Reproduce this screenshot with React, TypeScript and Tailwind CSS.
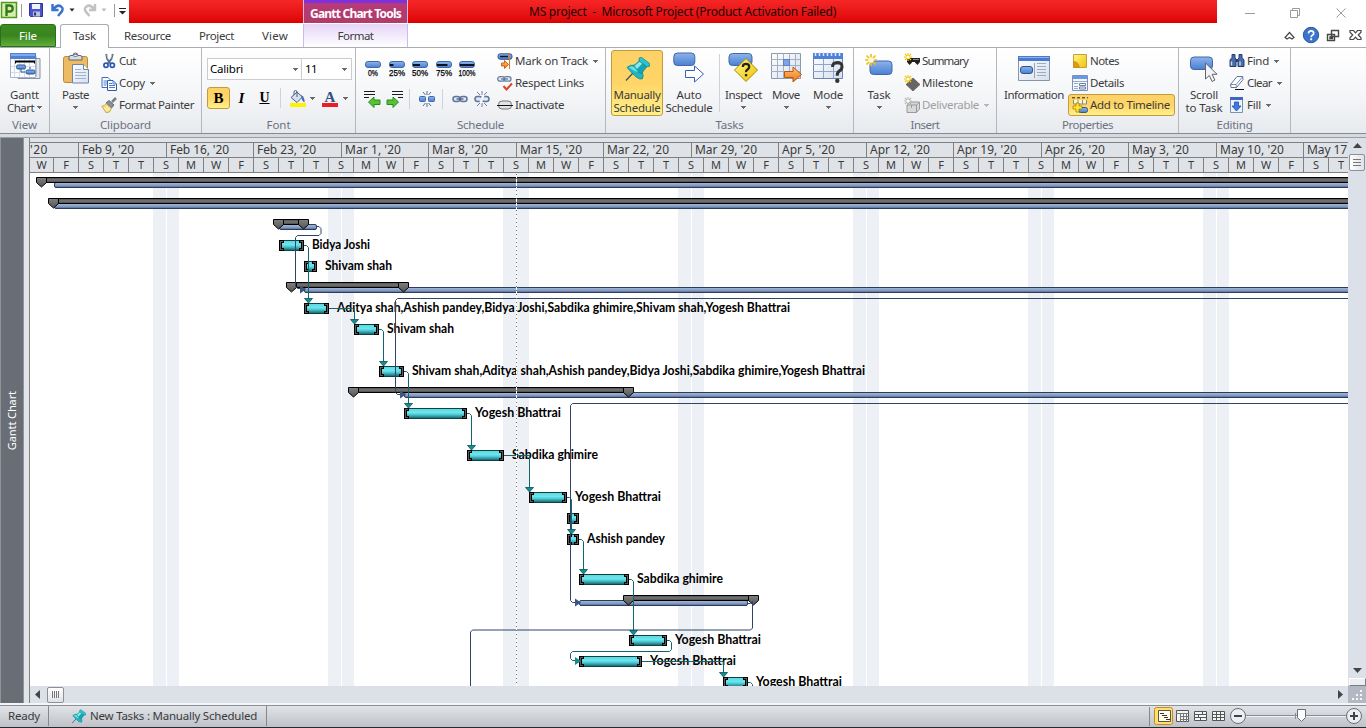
import { useLayoutEffect, useRef } from "react";
import type { ReactNode } from "react";

/* Text run spaced out to an exact width. */
function Fit({ w, children, className = "" }: { w: number; children: string; className?: string }) {
  const ref = useRef<HTMLSpanElement>(null);
  useLayoutEffect(() => {
    const el = ref.current;
    if (!el) return;
    el.style.letterSpacing = "0px";
    const gap = (w - el.getBoundingClientRect().width) / children.length;
    el.style.letterSpacing = `${gap}px`;
  }, [w, children]);
  return (
    <span ref={ref} className={`inline-block shrink-0 whitespace-pre ${className}`}>
      {children}
    </span>
  );
}

const Caret = ({ className = "text-[#6a6a6a]" }: { className?: string }) => (
  <svg width="5" height="3" viewBox="0 0 5 3" className={`shrink-0 ${className}`} shapeRendering="crispEdges">
    <path d="M0 0h5v1H4v1H3v1H2V2H1V1H0z" fill="currentColor" />
  </svg>
);

function Defs() {
  return (
    <svg width="0" height="0" className="absolute">
      <defs>
        <linearGradient id="blue" x1="0" y1="0" x2="0" y2="1">
          <stop offset="0" stopColor="#8db4ec" />
          <stop offset="1" stopColor="#4a7fd0" />
        </linearGradient>
        <linearGradient id="paper" x1="0" y1="0" x2="1" y2="1">
          <stop offset="0" stopColor="#ffffff" />
          <stop offset="1" stopColor="#d5dfee" />
        </linearGradient>
        <linearGradient id="orange" x1="0" y1="0" x2="0" y2="1">
          <stop offset="0" stopColor="#ffc47a" />
          <stop offset="1" stopColor="#ee7410" />
        </linearGradient>
        <linearGradient id="yellow" x1="0" y1="0" x2="1" y2="1">
          <stop offset="0" stopColor="#fff68a" />
          <stop offset="1" stopColor="#f2c200" />
        </linearGradient>
        <linearGradient id="task" x1="0" y1="0" x2="0" y2="1">
          <stop offset="0" stopColor="#5fd8de" />
          <stop offset="0.4" stopColor="#6ce6ee" />
          <stop offset="0.6" stopColor="#50ccd4" />
          <stop offset="1" stopColor="#1c6b73" />
        </linearGradient>
        <linearGradient id="sum" x1="0" y1="0" x2="0" y2="1">
          <stop offset="0" stopColor="#4c4c4c" />
          <stop offset="0.5" stopColor="#767676" />
          <stop offset="1" stopColor="#444444" />
        </linearGradient>
        <linearGradient id="mark" x1="0" y1="0" x2="0" y2="1">
          <stop offset="0" stopColor="#808080" />
          <stop offset="1" stopColor="#555555" />
        </linearGradient>
        <linearGradient id="roll" x1="0" y1="0" x2="0" y2="1">
          <stop offset="0" stopColor="#a9bbd8" />
          <stop offset="0.6" stopColor="#8299c0" />
          <stop offset="1" stopColor="#4c6590" />
        </linearGradient>
      </defs>
    </svg>
  );
}

const Ico = ({ s = 16, w, h, children }: { s?: number; w?: number; h?: number; children: ReactNode }) => (
  <svg width={w ?? s} height={h ?? s} viewBox={`0 0 ${w ?? s} ${h ?? s}`} className="shrink-0" fill="none">
    {children}
  </svg>
);

const Star = ({ x = 0, y = 0, c = "#f5c400" }: { x?: number; y?: number; c?: string }) => (
  <g transform={`translate(${x} ${y})`} stroke={c} strokeWidth="1.1">
    <path d="M4 0v8M0 4h8M1 1l6 6M7 1l-6 6" />
    <circle cx="4" cy="4" r="1.6" fill="#fff" stroke="none" />
  </g>
);

const Pin = ({ s }: { s: number }) => (
  <svg width={s} height={s} viewBox="0 0 26 26" className="shrink-0" fill="none">
    <path d="M9 17L2 24.500" stroke="#3f5560" strokeWidth="1.300" />
    <path d="M3 11.500q3-3.200 7.500-2.300l8 7.300q1.500 4-.300 6.500-3 .5-6-2T3 11.500z" fill="#22b6c0" stroke="#138590" strokeWidth=".8" />
    <path d="M9.500 10l6-5.500 7.500 6-5.500 7q-3.500 0-8-7.500z" fill="#18a4ae" stroke="#138590" strokeWidth=".7" />
    <path d="M10.500 10l5.500-4.700 2.500 2-5.500 5.600z" fill="#86eaee" />
    <path d="M15 2.300q1.500-1.300 3-.6l7.500 5.800q1 1.600 0 2.800l-2.700.4L15.300 5z" fill="#2cc4cd" stroke="#138590" strokeWidth=".8" />
    <path d="M5 11.300q3-1.500 5-.3l4 5q-4-.5-9-4.700z" fill="#6fe0e5" />
  </svg>
);

const GanttIcon = () => (
  <Ico s={32}>
    <path d="M9 6.500h22v20H9z" fill="#e6e9ef" stroke="#8a93a3" />
    <path d="M5 4.500h22v20H5z" fill="#f2f4f8" stroke="#8a93a3" />
    <path d="M1.500 1.500h25v24h-25z" fill="#fdfdfe" stroke="#a4b2cc" />
    <path d="M1 1h26v6H1z" fill="#4e82d8" />
    <path d="M2 2h24v2H2z" fill="#80a8ea" />
    <path d="M5.500 7v18M10.500 7v18M15.500 7v18M20.500 7v18M2 14.500h24M2 20.500h24" stroke="#d4dded" />
    <path d="M6 8.500h20v3h-1v-1H7v1H6z" fill="#000" />
    <rect x="7.500" y="13" width="9" height="4" rx="1.500" fill="url(#blue)" stroke="#2a5592" />
    <rect x="17" y="18" width="9" height="4" rx="1.500" fill="url(#blue)" stroke="#2a5592" />
    <path d="M12 17v3h4M21 15v2" stroke="#2a5592" />
  </Ico>
);

const PasteIcon = () => (
  <Ico s={32}>
    <rect x="3.500" y="4.500" width="24" height="26" rx="2" fill="#edbb62" stroke="#b98a3c" />
    <path d="M9 8V5q0-1.500 2-1.500h2q0-2.500 2.500-2.500T18 3.500h2q2 0 2 1.500v3z" fill="#d9dce2" stroke="#5f6670" />
    <rect x="14" y="2.500" width="3" height="2" fill="#fff" stroke="#5f6670" strokeWidth=".7" />
    <path d="M12.500 12.500h11l5 5v13.500h-16z" fill="url(#paper)" stroke="#6d86ad" />
    <path d="M23.500 12.500v5h5" fill="#fff" stroke="#6d86ad" />
    <path d="M15 17.500h6M15 20.500h11M15 23.500h11M15 26.500h11" stroke="#9db3d6" />
  </Ico>
);

const CutIcon = () => (
  <Ico>
    <path d="M5.200 1l1 5 3 4.500M11.800 1l-1.500 5-3.500 4.500" stroke="#5d6b80" strokeWidth="1.900" />
    <path d="M5.800 2l1.500 4.500M11 2L9.500 6" stroke="#e6ecf5" strokeWidth=".6" />
    <circle cx="5" cy="12.300" r="2.100" stroke="#2857b8" strokeWidth="1.700" />
    <circle cx="11.300" cy="12.300" r="2.100" stroke="#2857b8" strokeWidth="1.700" />
  </Ico>
);
const CopyIcon = () => (
  <Ico>
    <path d="M1 2.500h6l3 3v7H1z" fill="#fff" stroke="#3c6cc0" />
    <path d="M2.500 6h4M2.500 8h4M2.500 10h3" stroke="#4d7bc9" />
    <path d="M6.500 5.500h5.500l3.500 3.500v6.500h-9z" fill="#fff" stroke="#2d5cb0" />
    <path d="M8 8.500h3M8 10.500h6M8 12.500h6M12 5.500v3.500h3.500" stroke="#4d7bc9" />
  </Ico>
);
const BrushIcon = () => (
  <Ico>
    <path d="M11 5l4-4" stroke="#7a7a8a" strokeWidth="2.500" />
    <path d="M8 3.500l5 4.500-2.500 3L5 6z" fill="#8890a0" stroke="#4a5060" strokeWidth=".8" />
    <path d="M5 6.500l5.500 4.800-2 3.700-3.500.6L.8 9.300q3-.3 4.200-2.800z" fill="#f7e08a" stroke="#c09a30" strokeWidth=".8" />
    <path d="M3.500 11l3 3M5.500 10l3 3" stroke="#fffbe0" />
  </Ico>
);

const PctIcon = ({ p, t }: { p: number; t: string }) => (
  <Ico w={18} h={18}>
    <rect x="1.500" y="1.500" width="15" height="6" rx="2.500" fill="url(#blue)" stroke="#3f69a8" />
    {p > 0 && <rect x="2" y="4" width={(14 * p) / 100} height="2" fill="#0a1220" />}
    <text x="9" y="15.500" fontSize="8.500" fontFamily="Liberation Sans" textAnchor="middle" textLength={t.length > 3 ? 17 : t.length > 2 ? 16 : 10} lengthAdjust="spacingAndGlyphs" fill="#000" stroke="#000" strokeWidth=".25">
      {t}
    </text>
  </Ico>
);

const Dent = ({ flip = false }: { flip?: boolean }) => (
  <Ico w={17} h={17}>
    <g transform={flip ? "translate(17 0) scale(-1 1)" : undefined}>
      <path d="M0 .5h11M0 3.500h11M0 6.500h5" stroke="#1a1a1a" />
      <path d="M4.500 11L10 6v3h6v4.500h-6v3z" fill="#54c435" stroke="#2c8a1c" />
    </g>
  </Ico>
);
const Chain = ({ cut = false }: { cut?: boolean }) => (
  <Ico w={16} h={16}>
    {cut && <path d="M8 0v4M8 16v-4M3 1l3 3M13 1l-3 3M3 15l3-3M13 15l-3-3" stroke="#5c7396" strokeWidth=".9" />}
    <rect x="1" y="5.500" width="7" height="5" rx="2.500" stroke="#5f769e" strokeWidth="1.500" fill="#dfe7f3" />
    <rect x="8" y="5.500" width="7" height="5" rx="2.500" stroke="#5f769e" strokeWidth="1.500" fill="#dfe7f3" />
    {cut ? <path d="M9.500 4l-3 8" stroke="#f6f7f9" strokeWidth="2.400" /> : <path d="M4.500 8h7" stroke="#455a80" strokeWidth="1.300" />}
  </Ico>
);
const SplitIcon = () => (
  <Ico>
    <path d="M8 0v4M8 16v-4M4 1l2.500 3M12 1L9.500 4M4 15l2.500-3M12 15l-2.500-3" stroke="#41618f" strokeWidth=".9" />
    <rect x=".5" y="5.500" width="6" height="5" rx="1" fill="url(#blue)" stroke="#3f69a8" />
    <rect x="9.500" y="5.500" width="6" height="5" rx="1" fill="url(#blue)" stroke="#3f69a8" />
  </Ico>
);
const MarkIcon = () => (
  <Ico>
    <rect x="1" y=".8" width="14" height="5.500" rx="2.200" fill="url(#blue)" stroke="#2f5590" />
    <path d="M3 3.500h8" stroke="#0a1220" strokeWidth="1.500" />
    <path d="M12.500 0v16" stroke="#e87810" />
    <path d="M4.500 10h3V7.500l4 4-4 4V13h-3z" fill="url(#orange)" stroke="#b85408" strokeWidth=".8" />
  </Ico>
);
const RespectIcon = () => (
  <Ico>
    <rect x=".7" y="1.700" width="7" height="4.500" rx="2.200" stroke="#6a80a6" strokeWidth="1.300" fill="#dfe7f3" />
    <rect x="7" y="1.700" width="7" height="4.500" rx="2.200" stroke="#6a80a6" strokeWidth="1.300" fill="#dfe7f3" />
    <path d="M4 4h7" stroke="#455a80" />
    <path d="M6.500 11l3 3.500L15 8.500" stroke="#dc4422" strokeWidth="2" />
  </Ico>
);
const InactIcon = () => (
  <Ico>
    <rect x="1.500" y="4" width="13" height="8" rx="3.500" fill="#e3e3e3" stroke="#777" />
    <path d="M0 8.500h16" stroke="#111" />
  </Ico>
);

const AutoIcon = () => (
  <Ico s={32}>
    <rect x=".8" y="1" width="21" height="12.500" rx="3.500" fill="url(#blue)" stroke="#3f69a8" />
    <path d="M12.500 18.500h9v-4.500l9 8-9 8v-4.500h-9z" fill="#fff" stroke="#355fb0" />
  </Ico>
);
const InspectIcon = () => (
  <Ico s={32}>
    <rect x="1" y="1.500" width="23" height="12" rx="3.500" fill="url(#blue)" stroke="#3f69a8" />
    <path d="M18 6.500L29.500 18 18 29.500 6.500 18z" fill="url(#yellow)" stroke="#a88a00" />
    <path d="M14.800 15q0-3.200 3.200-3.200t3.200 3q0 1.600-1.700 2.700T18 20.200" stroke="#222" strokeWidth="2.200" />
    <rect x="16.900" y="22" width="2.300" height="2.300" fill="#222" />
  </Ico>
);
const MoveIcon = () => (
  <Ico s={32}>
    <path d="M1.500 1.500h29v25h-29z" fill="url(#paper)" stroke="#8d99ae" />
    <path d="M7.500 1v25M13.500 1v25M19.500 1v25M25.500 1v25M1 7.500h29M1 13.500h29M1 19.500h29" stroke="#a5b0c4" />
    <rect x="13.500" y="7.500" width="6" height="6" fill="#7da2e8" stroke="#5a82cc" />
    <path d="M14.500 19.500h8.500V15l8.500 7.500-8.500 7.500v-4.500h-8.500z" fill="url(#orange)" stroke="#b35a10" />
  </Ico>
);
const ModeIcon = () => (
  <Ico s={32}>
    <path d="M1.500 1.500h29v25h-29z" fill="url(#paper)" stroke="#6f85b0" />
    <path d="M1 1h30v6H1z" fill="#4e82d8" />
    <path d="M3.500 0v4M7.500 0v4M11.500 0v4M15.500 0v4M19.500 0v4M23.500 0v4M27.500 0v4" stroke="#dfe8f8" strokeWidth="1.500" />
    <path d="M11.500 7v19M21.500 7v19M1 12.500h29M1 19.500h29" stroke="#8fa5cc" />
    <path d="M20.500 15q0-4.500 4.800-4.500T30 14.800q0 2.500-2.400 4t-2.400 5" stroke="#333" strokeWidth="3" />
    <circle cx="25.300" cy="28.800" r="2.200" fill="#333" />
  </Ico>
);
const TaskIcon = () => (
  <Ico s={32}>
    <rect x="7" y="9" width="22" height="13.500" rx="3.500" fill="url(#blue)" stroke="#3f69a8" />
    <path d="M8 2v12M2 8h12M3.500 3.500l9 9M12.500 3.500l-9 9" stroke="#f2c010" strokeWidth="1.700" />
    <circle cx="8" cy="8" r="2.800" fill="#fffbe0" />
  </Ico>
);
const InfoIcon = () => (
  <Ico s={32}>
    <path d="M.5 4.500h31v24H.500z" fill="url(#paper)" stroke="#8794ad" />
    <path d="M0 4h32v5H0z" fill="#4a7ad0" />
    <path d="M1 5h30v1H1z" fill="#8fb2ee" />
    <rect x="2.500" y="14.500" width="12" height="7" rx="2.500" fill="url(#blue)" stroke="#2f5590" />
    <path d="M16.500 11v15" stroke="#9aa6ba" />
    <path d="M19 11.500h9M19 14.500h9M19 17.500h9M19 20.500h9M19 23.500h9" stroke="#a0abbc" />
  </Ico>
);
const ScrollIcon = () => (
  <Ico s={32}>
    <rect x="2.500" y="5" width="22" height="12.500" rx="3.500" fill="url(#blue)" stroke="#3f69a8" />
    <path d="M17.500 11v16l3.800-3.500 2.800 6 2.800-1.400-2.800-5.800h5z" fill="#f2f4f7" stroke="#5d6470" />
  </Ico>
);
const SummaryIcon = () => (
  <Ico>
    <path d="M3 5h13v4l-2.500 3L11 9.500V9H8v.500L5.500 12 3 9z" fill="#222" />
    <path d="M9 6.500h6" stroke="#888" />
    <Star x={0} y={0} />
  </Ico>
);
const MilestoneIcon = () => (
  <Ico>
    <path d="M9 3l7 6.500-7 6.500-7-6.500z" fill="#666" stroke="#444" strokeWidth=".6" />
    <Star x={0} y={0} />
  </Ico>
);
const DeliverIcon = () => (
  <Ico>
    <path d="M3 8l3-3h9.500v7l-3 3.500H3z" fill="#d8d8d8" stroke="#9a9a9a" />
    <path d="M3 8h9.500v7.500M12.500 8l3-3M7.500 8v3" stroke="#9a9a9a" />
    <Star x={0} y={0} c="#b5b5b5" />
  </Ico>
);
const NotesIcon = () => (
  <Ico>
    <path d="M1.500 1.500h13v13h-13z" fill="url(#yellow)" stroke="#c0a040" />
    <path d="M1.500 8.500q5 0 6 6h-6z" fill="#e09a10" stroke="#b98a20" strokeWidth=".6" />
  </Ico>
);
const DetailsIcon = () => (
  <Ico>
    <path d="M.5.500h15v15H.500z" fill="#f4f7fc" stroke="#7890ba" />
    <path d="M1 1h14v3H1z" fill="#6c98e0" />
    <path d="M2 8.500h4M2 11.500h4M1 6.500h14M2 13.500h4" stroke="#9aaac4" />
    <path d="M7.500 8.500h6v2h-6zM7.500 12h6v2h-6z" stroke="#6880a8" fill="#fff" />
  </Ico>
);
const TimelineIcon = () => (
  <Ico>
    <path d="M0 .8h16" stroke="#222" strokeDasharray="3 2" />
    <path d="M1.500 3v4h13V3M6 3v4M10.500 3v4" stroke="#8a8a7a" fill="#fff7d0" />
    <rect x="6.500" y="10.500" width="9" height="5" rx="2" fill="url(#blue)" stroke="#2f5590" />
    <path d="M4 6h3v3h3v3H7v3H4v-3H1V9h3z" fill="#ffe83a" stroke="#a88400" strokeWidth=".8" />
  </Ico>
);
const FindIcon = () => (
  <Ico>
    <path d="M3 1.500h3v3l1 2v7H1V7l2-2.500zM10 1.500h3v3L15 7v6.500H9v-7l1-2z" fill="#4a6caa" stroke="#24406f" />
    <path d="M2.500 8.500v4M11 8.500v4" stroke="#c9d8f2" strokeWidth="1.400" />
    <path d="M7 7.500h2" stroke="#24406f" strokeWidth="3" />
  </Ico>
);
const ClearIcon = () => (
  <Ico>
    <path d="M8 1.500h5.500l.5 3-6.500 8H2l-.5-3z" fill="#fff" stroke="#5f74a0" />
    <path d="M1.500 9.500H7l7-8M7 9.500l.5 3" stroke="#5f74a0" strokeWidth=".8" />
    <path d="M6 14.500h9" stroke="#111" />
  </Ico>
);
const FillIcon = () => (
  <Ico>
    <path d="M1.500 1h12v14.500h-12z" fill="#eef3fb" stroke="#7890ba" />
    <path d="M1 0h13v3H1z" fill="#3e66c0" />
    <path d="M5.500 5h4v4h2.500l-4.500 5L3 9h2.500z" fill="#3f7be0" stroke="#1f4fa8" strokeWidth=".8" />
  </Ico>
);

const Small = ({ icon, text, w, caret = false, dim = false }: { icon: ReactNode; text: string; w: number; caret?: boolean; dim?: boolean }) => (
  <div className={`flex h-[22px] items-center ${dim ? "text-[#a0a0a0]" : ""}`}>
    {icon}
    <Fit w={w} className="ml-[2px]">{text}</Fit>
    {caret && <span className="ml-[5px]"><Caret className={dim ? "text-[#b5b5b5]" : "text-[#6a6a6a]"} /></span>}
  </div>
);

const Big = ({ icon, l1, w1, l2, w2, caret, cls }: { icon: ReactNode; l1: string; w1: number; l2?: string; w2?: number; caret?: boolean; cls: string }) => (
  <div className={`flex h-[66px] shrink-0 flex-col items-center pt-[2px] leading-[13px] ${cls}`}>
    <div className="flex h-[36px] shrink-0 items-start">{icon}</div>
    <Fit w={w1}>{l1}</Fit>
    <div className="flex h-[13px] items-center gap-[3px]">
      {l2 && <Fit w={w2 ?? 30}>{l2}</Fit>}
      {caret && <Caret />}
    </div>
  </div>
);

const Group = ({ label, lw, cls, children }: { label: string; lw: number; cls: string; children: ReactNode }) => (
  <div className={`flex shrink-0 flex-col border-r border-[#b4b8be] pt-[2px] ${cls}`}>
    <div className="flex h-[66px] shrink-0">{children}</div>
    <div className="flex h-[17px] items-center justify-center text-[#6b7280]">
      <Fit w={lw}>{label}</Fit>
    </div>
  </div>
);

const Sep = ({ cls = "bg-[#cfd2d7]" }: { cls?: string }) => <div className={`w-px shrink-0 ${cls}`} />;

function TitleBar() {
  return (
    <div className="flex h-[24px] bg-white">
      <div className="flex w-[129px] shrink-0 items-start">
        <svg width="129" height="22" viewBox="0 0 129 22" fill="none">
          <rect x="1.500" y="2.500" width="15" height="15" fill="#d7ecb0" stroke="#4f9a1c" strokeWidth="1.500" />
          <path d="M6.500 16V5.500h3.200q3 0 3 3t-3 3H7" stroke="#2f7a12" strokeWidth="2.300" />
          <path d="M21.500 4v13" stroke="#9a9a9a" />
          <path d="M29.500 3.500h13v13h-12l-1-1z" fill="#4b55c8" stroke="#2c3596" />
          <path d="M32 4h8v5h-8z" fill="#eef2fa" />
          <path d="M33 11.500h7v5h-7z" fill="#b9c2dc" />
          <path d="M34 12.500h2v3h-2z" fill="#26307f" />
          <path d="M52.500 4v6h6M53.500 9q4-5 7.500-2.500T60.500 13l-2.500 3" stroke="#3a72d2" strokeWidth="2.500" />
          <path d="M69.500 8.500h5l-2.500 3z" fill="#222" />
          <path d="M95 4v6h-6M94 9q-4-5-7.500-2.500T87 13l2.500 3" stroke="#c2c2c2" strokeWidth="2.500" />
          <path d="M101.500 8.500h5l-2.500 3z" fill="#bbb" />
          <path d="M114.500 4v13" stroke="#9a9a9a" />
          <path d="M119 8.500h7" stroke="#222" />
          <path d="M119 11h7l-3.500 3.500z" fill="#222" />
        </svg>
      </div>
      <div className="h-[23px] w-[174px] shrink-0 bg-linear-to-b from-[#f62626] to-[#dc0000]" />
      <div className="flex h-[23px] w-[105px] shrink-0 flex-col items-center border-x border-[#d9b9ea] bg-linear-to-b from-[#b8397c] to-[#b03c68]">
        <div className="h-[3px] w-full bg-[#7c31dc]" />
        <Fit w={91} className="mt-[3px] text-[12px] leading-[16px] font-bold text-white">Gantt Chart Tools</Fit>
      </div>
      <div className="flex h-[23px] w-[809px] shrink-0 bg-linear-to-b from-[#f62626] to-[#dc0000] pl-[121px]">
        <Fit w={307} className="text-[12px] leading-[23px] text-[#1c0505]">MS project  -  Microsoft Project (Product Activation Failed)</Fit>
      </div>
      <svg width="149" height="24" viewBox="1217 0 149 24" fill="none" stroke="#9a9a9a" className="shrink-0">
        <path d="M1245 13.500h10M1290.500 10.500h7v7h-7zM1292.500 10v-1.500h7v7h-2M1336.500 8.500l9 9M1345.500 8.500l-9 9" />
      </svg>
    </div>
  );
}

function Tabs() {
  return (
    <div className="flex h-[24px] border-b border-[#a9adb3] bg-white leading-[23px] text-[#3b3b3b]">
      <div className="flex h-[23px] w-[56px] shrink-0 justify-center rounded-t-[3px] border border-[#2c6e1a] bg-linear-to-b from-[#3d8b22] via-[#3a8420] to-[#5fb03a] text-white">
        <Fit w={18} className="leading-[22px]">File</Fit>
      </div>
      <div className="ml-[4px] flex h-[24px] w-[49px] shrink-0 justify-center rounded-t-[3px] border border-b-0 border-[#a9adb3] bg-white">
        <Fit w={23} className="leading-[22px]">Task</Fit>
      </div>
      <Fit w={47} className="ml-[15px]">Resource</Fit>
      <Fit w={35} className="ml-[28px]">Project</Fit>
      <Fit w={26} className="ml-[28px]">View</Fit>
      <div className="ml-[15px] flex h-[23px] w-[105px] shrink-0 justify-center border-x border-[#cdbbee] bg-linear-to-b from-[#e6d5f7] to-white">
        <Fit w={36}>Format</Fit>
      </div>
      <div className="flex flex-1 justify-end">
        <svg width="90" height="23" viewBox="1276 24 90 23" fill="none">
          <path d="M1285 37.500l4.500-5 4.500 5-2 1.500-2.500-1.500-2.500 1.500z" stroke="#484848" strokeWidth="1.200" />
          <circle cx="1311" cy="35" r="7.700" fill="#3c74cc" stroke="#2a57a4" />
          <path d="M1308.500 33.500q0-2.700 2.600-2.700t2.600 2.400q0 1.300-1.300 2t-1.300 2" stroke="#fff" strokeWidth="1.700" />
          <rect x="1310.200" y="38.300" width="1.900" height="1.900" fill="#fff" />
          <path d="M1331.500 30.500h7v6h-7zM1327.500 34.500h7v6h-7zM1330 37h2.500v1.500H1330z" stroke="#484848" fill="#fff" strokeWidth="1.400" />
          <path d="M1350 30.500h3.500l2 2.300 2-2.300h3.500v1.700l-2.700 2.800 2.700 2.800v1.700h-3.500l-2-2.300-2 2.300h-3.500v-1.700l2.700-2.800-2.700-2.800z" stroke="#484848" strokeWidth="1.200" />
        </svg>
      </div>
    </div>
  );
}

const gold = "border border-[#c29b3a] rounded-[3px] bg-linear-to-b from-[#fdd168] via-[#fed566] to-[#fff08a]";

function Ribbon() {
  return (
    <div className="flex h-[86px] overflow-hidden border-b border-[#868b92] bg-linear-to-b from-white via-[#f6f7f9] to-[#e7eaee] text-[#3b3b3b]">
      <Group label="View" lw={25} cls="w-[50px]">
        <Big cls="w-[49px]" icon={<GanttIcon />} l1="Gantt" w1={29} l2="Chart" w2={27} caret />
      </Group>
      <Group label="Clipboard" lw={51} cls="w-[152px]">
        <Big cls="w-[51px]" icon={<PasteIcon />} l1="Paste" w1={27} caret />
        <div className="flex flex-col">
          <Small icon={<CutIcon />} text="Cut" w={17} />
          <Small icon={<CopyIcon />} text="Copy" w={26} caret />
          <Small icon={<BrushIcon />} text="Format Painter" w={75} />
        </div>
      </Group>
      <Group label="Font" lw={24} cls="w-[154px]">
        <div className="flex flex-col pt-[8px] pl-[5px]">
          <div className="flex">
            <div className="flex h-[22px] w-[95px] items-center justify-between border border-[#c9ccd1] bg-white pr-[3px] pl-[2px] text-black">
              <Fit w={33}>Calibri</Fit><Caret />
            </div>
            <div className="-ml-px flex h-[22px] w-[51px] items-center justify-between border border-[#c9ccd1] bg-white pr-[4px] pl-[3px] text-black">
              <Fit w={12}>11</Fit><Caret />
            </div>
          </div>
          <div className="mt-[7px] flex h-[22px] items-center font-['Liberation_Serif'] text-[15px] text-black">
            <div className={`flex h-[22px] w-[23px] items-center justify-center font-bold ${gold}`}>B</div>
            <div className="flex w-[23px] justify-center font-bold italic">I</div>
            <div className="flex w-[23px] justify-center border-black"><span className="text-[14px] font-bold underline">U</span></div>
            <Sep cls="ml-[4px] h-[20px] bg-[#cfd2d7]" />
            <div className="ml-[8px] flex items-center gap-[4px]">
              <Ico w={17} h={17}>
                <path d="M2 7.500l6-5.500 5.500 5-5.500 5.500z" fill="#d5dff0" stroke="#4b5e82" />
                <path d="M5 5V2q0-1.500 1.500-1.500T8 2v5" stroke="#4b5e82" />
                <path d="M12 5q4 2 3.500 7.500Q13 11 12.500 8z" fill="#3f6cb8" />
                <path d="M1 13h16v4H1z" fill="#fff200" />
              </Ico>
              <Caret />
            </div>
            <div className="ml-[7px] flex items-center gap-[5px]">
              <Ico w={16} h={17}>
                <text x="8" y="12" fontSize="15" fontWeight="bold" fontFamily="Liberation Serif" textAnchor="middle" fill="#2f4f86">A</text>
                <path d="M0 13h16v4H0z" fill="#ee1c24" />
              </Ico>
              <Caret />
            </div>
          </div>
        </div>
        <div className="flex-1" />
      </Group>
      <Group label="Schedule" lw={47} cls="w-[250px]">
        <div className="flex w-[141px] shrink-0 flex-col pt-[10px] pl-[8px]">
          <div className="flex gap-[5.500px]">
            <PctIcon p={0} t="0%" />
            <PctIcon p={25} t="25%" />
            <PctIcon p={50} t="50%" />
            <PctIcon p={75} t="75%" />
            <PctIcon p={100} t="100%" />
          </div>
          <div className="mt-[11px] flex items-center">
            <Dent />
            <div className="ml-[5px]"><Dent flip /></div>
            <Sep cls="ml-[6px] h-[20px] bg-[#cfd2d7]" />
            <div className="ml-[9px]"><SplitIcon /></div>
            <Sep cls="ml-[7px] h-[20px] bg-[#cfd2d7]" />
            <div className="ml-[9px]"><Chain /></div>
            <div className="ml-[6px]"><Chain cut /></div>
          </div>
        </div>
        <div className="flex flex-col">
          <Small icon={<MarkIcon />} text="Mark on Track" w={73} caret />
          <Small icon={<RespectIcon />} text="Respect Links" w={69} />
          <Small icon={<InactIcon />} text="Inactivate" w={49} />
        </div>
      </Group>
      <Group label="Tasks" lw={28} cls="w-[248px]">
        <div className={`ml-[5px] flex h-[66px] w-[52px] shrink-0 flex-col items-center pt-px leading-[13px] ${gold}`}>
          <div className="flex h-[36px] shrink-0 items-start pt-[4px]"><Pin s={26} /></div>
          <Fit w={47}>Manually</Fit>
          <Fit w={47}>Schedule</Fit>
        </div>
        <Big cls="w-[52px]" icon={<AutoIcon />} l1="Auto" w1={25} l2="Schedule" w2={47} />
        <Sep cls="mt-[4px] ml-[4px] h-[58px] bg-[#cfd2d7]" />
        <Big cls="ml-[2px] w-[43px]" icon={<InspectIcon />} l1="Inspect" w1={37} caret />
        <Big cls="w-[42px]" icon={<MoveIcon />} l1="Move" w1={28} caret />
        <Big cls="w-[42px]" icon={<ModeIcon />} l1="Mode" w1={30} caret />
      </Group>
      <Group label="Insert" lw={29} cls="w-[143px]">
        <Big cls="w-[50px]" icon={<TaskIcon />} l1="Task" w1={23} caret />
        <div className="flex flex-col">
          <Small icon={<SummaryIcon />} text="Summary" w={46} />
          <Small icon={<MilestoneIcon />} text="Milestone" w={51} />
          <Small icon={<DeliverIcon />} text="Deliverable" w={57} caret dim />
        </div>
      </Group>
      <Group label="Properties" lw={51} cls="w-[182px]">
        <Big cls="ml-[4px] w-[66px]" icon={<InfoIcon />} l1="Information" w1={60} />
        <div className="ml-px flex flex-col">
          <div className="pl-[4px]"><Small icon={<NotesIcon />} text="Notes" w={29} /></div>
          <div className="pl-[4px]"><Small icon={<DetailsIcon />} text="Details" w={34} /></div>
          <div className={`flex h-[22px] w-[107px] items-center pl-[3px] ${gold}`}>
            <TimelineIcon />
            <Fit w={80} className="ml-[2px]">Add to Timeline</Fit>
          </div>
        </div>
      </Group>
      <Group label="Editing" lw={36} cls="w-[112px]">
        <Big cls="w-[50px]" icon={<ScrollIcon />} l1="Scroll" w1={28} l2="to Task" w2={37} />
        <div className="flex flex-col">
          <Small icon={<FindIcon />} text="Find" w={22} caret />
          <Small icon={<ClearIcon />} text="Clear" w={25} caret />
          <Small icon={<FillIcon />} text="Fill" w={14} caret />
        </div>
      </Group>
    </div>
  );
}

const weeks: [string, number, number][] = [
  ["'20", 48, 18], ["Feb 9, '20", 88, 52], ["Feb 16, '20", 87, 59], ["Feb 23, '20", 88, 59], ["Mar 1, '20", 87, 56],
  ["Mar 8, '20", 88, 56], ["Mar 15, '20", 87, 62], ["Mar 22, '20", 88, 62], ["Mar 29, '20", 87, 62], ["Apr 5, '20", 88, 53],
  ["Apr 12, '20", 87, 60], ["Apr 19, '20", 88, 60], ["Apr 26, '20", 87, 60], ["May 3, '20", 88, 57], ["May 10, '20", 87, 64], ["May 17", 46, 40],
];
const dayCycle = ["S", "T", "T", "S", "M", "W", "F"];
const days = ["F", ...Array.from({ length: 51 }, (_, i) => dayCycle[i % 7])];

function Timescale() {
  return (
    <div className="flex h-[31px] w-[1318px] flex-col overflow-hidden border-b border-[#808080] bg-[#dfe3e8] text-[12px] text-[#3a3a3a]">
      <div className="flex h-[16px] shrink-0 border-y border-[#808080] leading-[14px]">
        {weeks.map(([t, w, tw], i) => (
          <div key={t} className={`flex shrink-0 ${i < 15 ? "border-r border-[#808080]" : ""} ${i ? "pl-[3px]" : ""}`} style={{ width: i ? w : 49 }}>
            <Fit w={tw}>{t}</Fit>
          </div>
        ))}
      </div>
      <div className="flex h-[14px] shrink-0 text-[11px] leading-[14px]">
        <div className="flex w-[24px] shrink-0 justify-center border-r border-[#808080]">W</div>
        {days.map((d, i) => (
          <div key={i} className="flex w-[25px] shrink-0 justify-center border-r border-[#808080]">{d}</div>
        ))}
      </div>
    </div>
  );
}

/* x, y, width, label, label x, label width */
const tasks: [number, number, number, string, number, number][] = [
  [279, 240, 25, "Bidya Joshi", 312, 58],
  [304, 261, 13, "Shivam shah", 325, 67],
  [304, 303, 25, "Aditya shah,Ashish pandey,Bidya Joshi,Sabdika ghimire,Shivam shah,Yogesh Bhattrai", 337, 453],
  [354, 324, 25, "Shivam shah", 387, 67],
  [379, 366, 25, "Shivam shah,Aditya shah,Ashish pandey,Bidya Joshi,Sabdika ghimire,Yogesh Bhattrai", 412, 453],
  [404, 408, 63, "Yogesh Bhattrai", 475, 86],
  [467, 450, 37, "Sabdika ghimire", 512, 86],
  [529, 492, 38, "Yogesh Bhattrai", 575, 86],
  [567, 513, 12, "", 0, 0],
  [567, 534, 12, "Ashish pandey", 587, 78],
  [579, 574, 50, "Sabdika ghimire", 637, 86],
  [629, 635, 38, "Yogesh Bhattrai", 675, 86],
  [579, 656, 63, "Yogesh Bhattrai", 650, 86],
  [723, 677, 25, "Yogesh Bhattrai", 756, 86],
];
const rollups: [number, number, number][] = [
  [54, 182, 1400], [54, 203, 1400], [279, 224, 317], [304, 287, 1400], [404, 392, 1400], [579, 600, 748],
];
const summaries: [number, number, number][] = [
  [36, 177, 1400], [48, 198, 1400], [273, 219, 309], [286, 282, 409], [348, 387, 634], [623, 595, 759],
];

const Marker = ({ x, y }: { x: number; y: number }) => (
  <path d={`M${x + 0.5} ${y + 0.5}h10v5l-5 4.500l-5-4.500z`} fill="url(#mark)" stroke="#000" />
);
const Down = ({ x, y }: { x: number; y: number }) => (
  <path d={`M${x - 4} ${y - 4.5}h8l-4 4.500z`} fill="#148c92" stroke="#0f5f66" strokeWidth=".9" />
);
const Right = ({ x, y, c }: { x: number; y: number; c: string }) => <path d={`M${x - 6} ${y - 4}v8l6-4z`} fill={c} />;

function Chart() {
  const teal = "#11676d";
  const navy = "#2f4468";
  return (
    <svg width="1318" height="513" viewBox="30 173 1318 513" className="block bg-white" fill="none">
      {Array.from({ length: 7 }, (_, i) => (
        <g key={i} fill="#edf1f6">
          <rect x={153 + i * 175} y="173" width="13" height="513" />
          <rect x={167 + i * 175} y="173" width="12" height="513" />
        </g>
      ))}
      {rollups.map(([x, y, e], i) => (
        <rect key={i} x={x + 0.5} y={y + 0.5} width={e - x - 1} height="5" rx="1.500" fill="url(#roll)" stroke="#2b3c5c" />
      ))}
      {summaries.map(([x, y, e], i) => (
        <g key={i}>
          <rect x={x + 5} y={y + 0.5} width={e - x - 10} height="5" fill="url(#sum)" stroke="#000" />
          <Marker x={x} y={y} />
          <Marker x={e - 11} y={y} />
        </g>
      ))}
      {tasks.map(([x, y, w], i) => (
        <g key={i} shapeRendering="crispEdges">
          <rect x={x} y={y} width={w} height="11" fill="#0a4348" />
          <rect x={x + 1} y={y + 1} width={w - 2} height="9" fill="url(#task)" />
          <path d={`M${x} ${y}h5v3h-2v5h2v3h-5zM${x + w} ${y}h-5v3h2v5h-2v3h5z`} fill="#000" />
          <path d={`M${x + 1} ${y + 1}h3v1h-2v7h2v1h-3zM${x + w - 1} ${y + 1}h-3v1h2v7h-2v1h3z`} fill="#5a5a5a" />
        </g>
      ))}
      {tasks.map(([, y, , t, lx, lw], i) =>
        t ? (
          <text key={i} x={lx} y={y + 9} fontSize="12.750" fontWeight="bold" fontFamily="Lato, sans-serif" fill="#000" textLength={lw} lengthAdjust="spacingAndGlyphs">
            {t}
          </text>
        ) : null,
      )}
      <g stroke={teal}>
        <path d="M304 245.500h2.500l2 2V299M329 308.500h23.500l2 2V320M379 329.500h2.500l2 2V362M404 371.500h2.500l2 2V404M467 413.500h2.500l2 2V446M504 455.500h25.500V488M567 497.500h2.500l2 2V530M579 539.500h2.500l2 2V570M629 579.500h2.500l2 2V631" />
        <path d="M667 640.500h2.500l2 2v7l-2 2h-97l-2 2v5l2 2h4M642 661.500h81.500V673M748 682.500h2.500l2 2v3" />
      </g>
      <g stroke={navy}>
        <path d="M317 226.500h2l2 2v5l-2 2h-21.500l-2 2v49l2 2h3M1348 298.500h-950.500l-2 2v92l2 2h3M1348 403.500h-775.500l-2 2v195l2 2h3M748 603.500h2l2.500-2v26.500l-2 2h-278l-2 2v56" />
      </g>
      {[[308.500, 303], [354.500, 324], [383.500, 366], [408.500, 408], [471.500, 450], [529.500, 492], [571.500, 534], [583.500, 574], [633.500, 635], [723.500, 677]].map(([x, y]) => (
        <Down key={y} x={x} y={y} />
      ))}
      <Right x={306} y={289.500} c="#3b5680" />
      <Right x={406} y={394.500} c="#3b5680" />
      <Right x={581} y={602.500} c="#3b5680" />
      <Right x={581} y={661} c="#148c92" />
      <path d="M516.500 173v513" stroke="#fff" />
      <path d="M516.500 174v512" stroke="#707070" strokeDasharray="1 3" />
    </svg>
  );
}

function StatusBar() {
  return (
    <div className="flex h-[22px] items-center border-b border-[#26282c] bg-linear-to-b from-[#e0e3e7] to-[#bfc3c9] pb-px text-[#3b3b3b]">
      <Fit w={32} className="ml-[8px]">Ready</Fit>
      <Sep cls="ml-[8px] h-[20px] bg-[#85898f]" />
      <div className="ml-[22px] flex"><Pin s={15} /></div>
      <Fit w={167} className="ml-[4px]">New Tasks : Manually Scheduled</Fit>
      <Sep cls="ml-[9px] h-[20px] bg-[#85898f]" />
      <div className="flex-1" />
      <svg width="218" height="20" viewBox="1148 706 218 20" fill="none">
        <path d="M1149.500 707v20" stroke="#85898f" />
        <rect x="1154.500" y="707.500" width="18" height="17" rx="2" fill="#ffe06c" stroke="#c28a20" />
        <path d="M1158.500 710.500h12v11h-12z" fill="#fffbe6" stroke="#555" />
        <path d="M1160 713.500h4M1162 715.500h5M1164 717.500h4M1166 719.500h4" stroke="#333" />
        <path d="M1176.500 710.500h12v11h-12z" fill="#f4f5f7" stroke="#555" />
        <path d="M1176 713.500h13M1180.500 713v9M1183.500 713v9M1186.500 713v9M1180 716.500h9M1180 719.500h9" stroke="#777" />
        <path d="M1194.500 711.500h12v9h-12zM1194 714.500h13M1194 717.500h13M1202.500 711v3M1198.500 714v3M1200.500 717v4" fill="#f4f5f7" stroke="#555" />
        <path d="M1212.500 711.500h12v9h-12zM1212 714.500h13M1212 717.500h13M1216.500 711v10M1220.500 711v10" fill="#f4f5f7" stroke="#555" />
        <path d="M1246 715.500h100" stroke="#868c96" />
        <path d="M1246 716.500h100" stroke="#eef0f3" />
        <circle cx="1238" cy="716" r="7.500" fill="#eceef1" stroke="#6a6f77" />
        <path d="M1234 716h8" stroke="#444" strokeWidth="2" />
        <circle cx="1354" cy="716" r="7.500" fill="#eceef1" stroke="#6a6f77" />
        <path d="M1350 716h8M1354 712v8" stroke="#444" strokeWidth="2" />
        <path d="M1295.500 713v6" stroke="#868c96" />
        <path d="M1297.500 709.500h8v8l-4 4-4-4z" fill="#fff" stroke="#6a6f77" />
      </svg>
    </div>
  );
}

export default function App() {
  return (
    <div className="flex h-[728px] w-[1366px] flex-col overflow-hidden bg-[#e1e4e9] font-['Noto_Sans','Open_Sans',sans-serif] text-[11.5px] leading-[14px]">
      <Defs />
      <TitleBar />
      <Tabs />
      <Ribbon />
      <div className="h-[4px] border-b border-[#9a9fa6] bg-[#d6dade]" />
      <div className="flex h-[565px] shrink-0">
        <div className="flex w-[24px] shrink-0 items-center justify-center border-r border-l border-[#8f949b] bg-[#696d75] text-white">
          <div className="rotate-180 text-[11px] leading-[14px] tracking-[-0.1px] whitespace-nowrap [writing-mode:vertical-rl]">Gantt Chart</div>
        </div>
        <div className="w-[6px] shrink-0 border-r border-[#808080] bg-[#e1e4e9]" />
        <div className="flex w-[1318px] shrink-0 flex-col pt-[4px]">
          <Timescale />
          <Chart />
          <div className="flex h-[17px] items-center justify-between bg-[#dce0e8] pr-[5px] pl-[5px]">
            <div className="flex items-center gap-[7px]">
              <svg width="5" height="9" viewBox="0 0 5 9"><path d="M5 0v9L0 4.500z" fill="#444" /></svg>
              <div className="flex h-[16px] w-[17px] items-center justify-center gap-px rounded-[2px] border border-[#8b909a] bg-linear-to-b from-white to-[#dfe2e8]">
                <div className="h-[7px] w-px bg-[#777]" /><div className="h-[7px] w-px bg-[#777]" /><div className="h-[7px] w-px bg-[#777]" /><div className="h-[7px] w-px bg-[#777]" />
              </div>
            </div>
            <svg width="5" height="9" viewBox="0 0 5 9"><path d="M0 0v9l5-4.500z" fill="#444" /></svg>
          </div>
        </div>
        <div className="flex w-[18px] shrink-0 flex-col items-center bg-[#dce0e8] pt-[5px]">
          <svg width="9" height="5" viewBox="0 0 9 5"><path d="M0 5h9L4.500 0z" fill="#444" /></svg>
          <div className="mt-[6px] flex h-[17px] w-[16px] flex-col items-center justify-center gap-[2px] rounded-[2px] border border-[#8b909a] bg-linear-to-r from-white to-[#dfe2e8]">
            <div className="h-px w-[8px] bg-[#777]" /><div className="h-px w-[8px] bg-[#777]" /><div className="h-px w-[8px] bg-[#777]" />
          </div>
          <div className="flex-1" />
          <svg width="9" height="5" viewBox="0 0 9 5"><path d="M0 0h9L4.500 5z" fill="#444" /></svg>
          <div className="mt-[5px] h-[8px] w-[17px] border border-[#777c85] border-t-white border-l-white bg-[#eceef1]" />
          <svg width="18" height="17" viewBox="0 0 18 17" fill="#f5f6f8">
            <path d="M0 0h18v17H0z" fill="#b4b8c2" />
            <path d="M12 4h2v2h-2zM12 8h2v2h-2zM8 8h2v2H8zM12 12h2v2h-2zM8 12h2v2H8zM4 12h2v2H4z" />
          </svg>
        </div>
      </div>
      <div className="h-[3px] border-b border-[#8b8f96] bg-[#f4f5f7]" />
      <StatusBar />
    </div>
  );
}
